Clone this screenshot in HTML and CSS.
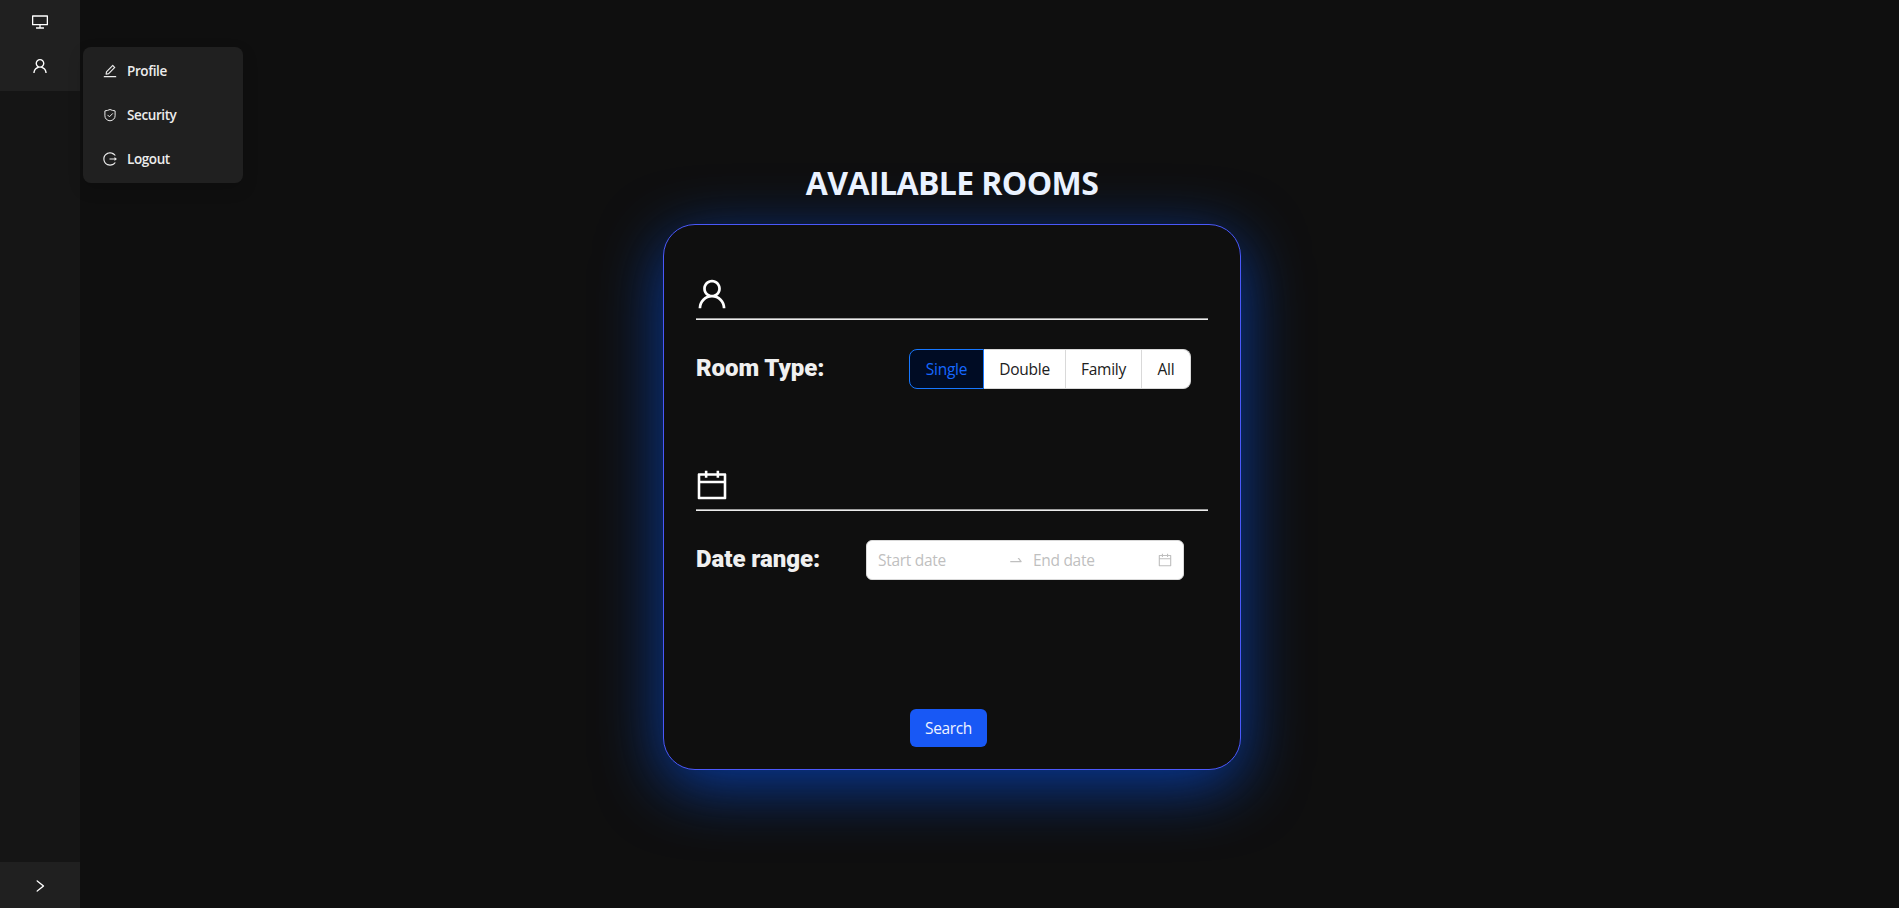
FILE: index.html
```
<!DOCTYPE html>
<html lang="en">
<head>
<meta charset="utf-8">
<title>Available Rooms</title>
<link rel="stylesheet" href="styles.css">
</head>
<body>
<svg class="defs" width="0" height="0">
  <symbol id="user" viewBox="64 64 896 896"><path d="M858.5 763.6a374 374 0 00-80.6-119.5 375.63 375.63 0 00-119.5-80.6c-.4-.2-.8-.3-1.2-.5C719.5 518 760 444.7 760 362c0-137-111-248-248-248S264 225 264 362c0 82.7 40.5 156 102.8 201.1-.4.2-.8.3-1.2.5-44.800 18.900-85 46-119.500 80.600a375.630 375.630 0 00-80.600 119.500A371.700 371.700 0 00136 901.800a8 8 0 008 8.200h60c4.400 0 7.900-3.500 8-7.800 2-77.200 33-149.500 87.800-204.300 56.700-56.700 132-87.900 212.200-87.900s155.500 31.200 212.200 87.900C779 752.700 810 825 812 902.200c.1 4.400 3.600 7.800 8 7.800h60a8 8 0 008-8.200c-1-47.800-10.900-94.300-29.500-138.200zM512 534c-45.900 0-89.100-17.900-121.600-50.400S340 407.900 340 362c0-45.900 17.900-89.100 50.400-121.600S466.100 190 512 190s89.100 17.900 121.600 50.400S684 316.100 684 362c0 45.900-17.900 89.100-50.400 121.600S557.900 534 512 534z"/></symbol>
  <symbol id="calendar" viewBox="64 64 896 896"><path d="M880 184H712v-64c0-4.400-3.600-8-8-8h-56c-4.400 0-8 3.600-8 8v64H384v-64c0-4.400-3.600-8-8-8h-56c-4.400 0-8 3.600-8 8v64H144c-17.700 0-32 14.300-32 32v664c0 17.700 14.300 32 32 32h736c17.700 0 32-14.300 32-32V216c0-17.700-14.300-32-32-32zm-40 656H184V460h656v380zM184 392V256h128v48c0 4.400 3.600 8 8 8h56c4.400 0 8-3.600 8-8v-48h256v48c0 4.400 3.600 8 8 8h56c4.400 0 8-3.600 8-8v-48h128v136H184z"/></symbol>
  <symbol id="desktop" viewBox="64 64 896 896"><path d="M928 140H96c-17.700 0-32 14.300-32 32v496c0 17.700 14.300 32 32 32h380v112H304c-8.800 0-16 7.200-16 16v48c0 4.400 3.600 8 8 8h432c4.400 0 8-3.600 8-8v-48c0-8.800-7.200-16-16-16H548V700h380c17.700 0 32-14.300 32-32V172c0-17.700-14.300-32-32-32zm-40 488H136V212h752v416z"/></symbol>
  <symbol id="edit" viewBox="64 64 896 896"><path d="M257.700 752c2 0 4-.2 6-.5L431.900 722c2-.4 3.900-1.300 5.300-2.800l423.900-423.900a9.960 9.960 0 000-14.100L694.900 114.900c-1.900-1.900-4.400-2.900-7.100-2.900s-5.200 1-7.100 2.900L256.800 538.800c-1.500 1.500-2.400 3.300-2.800 5.300l-29.500 168.200a33.500 33.500 0 009.400 29.800c6.600 6.400 14.900 9.900 23.800 9.900zm67.400-174.400L687.800 215l73.300 73.300-362.700 362.600-88.900 15.700 15.600-89zM880 836H144c-17.700 0-32 14.300-32 32v36c0 4.400 3.600 8 8 8h784c4.400 0 8-3.600 8-8v-36c0-17.700-14.300-32-32-32z"/></symbol>
  <symbol id="shield" viewBox="0 0 14 14" fill="none" stroke="currentColor"><path d="M1.900 2.900C3.700 2.700 5.500 2.200 7 1.500c1.500.7 3.300 1.200 5.100 1.400v4.900c0 2.700-2 4.700-5.100 5-3.100-.3-5.100-2.300-5.100-5z"/><path d="M4.500 6.900l1.900 1.900 3.400-3.400"/></symbol>
  <symbol id="logout" viewBox="64 64 896 896"><path d="M868 732h-70.300c-4.800 0-9.300 2.100-12.300 5.800-7 8.500-14.500 16.700-22.400 24.500a353.840 353.840 0 01-112.700 75.900A352.800 352.800 0 01512.400 866c-47.900 0-94.300-9.400-137.900-27.800a353.840 353.840 0 01-112.700-75.900 353.280 353.280 0 01-76-112.500C167.300 606.200 158 559.900 158 512s9.400-94.200 27.800-137.800c17.800-42.100 43.400-80 76-112.500s70.500-58.100 112.700-75.900c43.600-18.400 90-27.800 137.900-27.800 47.900 0 94.300 9.300 137.900 27.800 42.200 17.800 80.100 43.400 112.700 75.900 7.900 7.900 15.300 16.100 22.400 24.500 3 3.700 7.600 5.800 12.300 5.800H868c6.300 0 10.200-7 6.700-12.300C798 160.500 663.800 81.600 511.300 82 271.700 82.600 79.600 277.100 82 516.400 84.400 751.900 276.200 942 512.400 942c152.100 0 285.700-78.800 362.300-197.700 3.400-5.300-.4-12.300-6.700-12.300zm88.900-226.300L815 393.700c-5.300-4.200-13-.4-13 6.300v76H488c-4.400 0-8 3.600-8 8v56c0 4.400 3.600 8 8 8h314v76c0 6.700 7.800 10.500 13 6.300l141.900-112a8 8 0 000-12.600z"/></symbol>
  <symbol id="right" viewBox="64 64 896 896"><path d="M765.700 486.800L314.900 134.700A7.970 7.970 0 00302 141v77.300c0 4.900 2.300 9.600 6.100 12.600l360 281.100-360 281.100c-3.900 3-6.100 7.700-6.100 12.600V883c0 6.700 7.700 10.400 12.900 6.300l450.800-352.100a31.960 31.960 0 000-50.400z"/></symbol>
  <symbol id="swap-right" viewBox="0 0 1024 1024"><path d="M873.100 596.200l-164-208A32 32 0 00684 376h-64.800c-6.700 0-10.400 7.700-6.300 13l144.300 183H152c-4.400 0-8 3.600-8 8v60c0 4.400 3.600 8 8 8h695.900c26.800 0 41.700-30.800 25.200-51.800z"/></symbol>
</svg>

<div class="layout">
  <aside class="sider">
    <nav class="menu">
      <a class="menu-item"><svg class="icon-16"><use href="#desktop"/></svg></a>
      <a class="menu-item"><svg class="icon-16"><use href="#user"/></svg></a>
    </nav>
    <button class="trigger"><svg class="icon-14"><use href="#right"/></svg></button>
    <div class="submenu">
      <a class="submenu-item"><svg class="icon-14"><use href="#edit"/></svg><span>Profile</span></a>
      <a class="submenu-item"><svg class="icon-14"><use href="#shield"/></svg><span>Security</span></a>
      <a class="submenu-item"><svg class="icon-14"><use href="#logout"/></svg><span>Logout</span></a>
    </div>
  </aside>

  <main class="content">
    <h1 class="title">AVAILABLE ROOMS</h1>
    <section class="card">
      <div class="section-head"><svg class="icon-32"><use href="#user"/></svg></div>
      <div class="row">
        <h2 class="label label-room">Room Type:</h2>
        <div class="radio-group">
          <span class="radio radio-single">Single</span>
          <span class="radio radio-double">Double</span>
          <span class="radio radio-family">Family</span>
          <span class="radio radio-all">All</span>
        </div>
      </div>
      <div class="section-head section-date"><svg class="icon-32"><use href="#calendar"/></svg></div>
      <div class="row">
        <h2 class="label label-date">Date range:</h2>
        <div class="picker">
          <span class="start">Start date</span>
          <svg class="icon-16 arrow"><use href="#swap-right"/></svg>
          <span class="end">End date</span>
          <svg class="icon-14"><use href="#calendar"/></svg>
        </div>
      </div>
      <button class="search">Search</button>
    </section>
  </main>
</div>
</body>
</html>
```
FILE: styles.css
```
* { box-sizing: border-box; }
body {
  margin: 0;
  background: #0f0f0f;
  color: #fff;
  font-family: "Open Sans", "Noto Sans", sans-serif;
  overflow: hidden;
}
svg { fill: currentColor; flex: none; display: block; }
.defs { position: absolute; }
.icon-14 { width: 14px; height: 14px; }
.icon-16 { width: 16px; height: 16px; }
.icon-32 { width: 32px; height: 32px; }

.layout { display: flex; height: 908px; }
.sider {
  position: relative;
  width: 80px;
  flex: none;
  display: flex;
  flex-direction: column;
  justify-content: space-between;
  background: #151515;
}
.menu { height: 91px; background: #202020; }
.menu-item { display: flex; height: 44px; align-items: center; justify-content: center; }
.trigger {
  height: 46px;
  border: 0;
  padding: 2px 0 0;
  display: flex;
  align-items: center;
  justify-content: center;
  background: #202020;
  color: #fff;
}
.submenu {
  position: absolute;
  left: 83px;
  top: 47px;
  width: 160px;
  height: 136px;
  padding: 2px 0;
  border-radius: 8px;
  background: #202020;
  box-shadow: 0 6px 16px rgba(0, 0, 0, .15);
}
.submenu-item {
  display: flex;
  align-items: center;
  gap: 10px;
  height: 44px;
  padding-left: 20px;
  font-size: 13.5px;
  font-weight: 600;
  letter-spacing: -.4px;
  color: #ececec;
}
.submenu-item span { padding-bottom: 1px; }

.content { width: 578px; margin-left: 583px; padding-top: 161px; }
.title {
  margin: 0;
  height: 63px;
  text-align: center;
  font-size: 32px;
  line-height: 44px;
  font-weight: 700;
  letter-spacing: -.6px;
  color: #eaf2ff;
  position: relative;
  z-index: 1;
  white-space: nowrap;
}
.card {
  height: 546px;
  padding: 53px 32px 0;
  border: 1px solid #4a58fa;
  border-radius: 32px;
  background: #0f0f0f;
  box-shadow: 0 16px 64px rgba(6, 60, 165, .95);
}
.section-head { height: 42px; border-bottom: 1px solid #ececec; box-shadow: inset 0 -1px #9c9c9c; }
.section-date { margin-top: 80px; }
.row { display: flex; height: 69px; padding-top: 29px; }
.label {
  margin: 0;
  padding-top: 1px;
  font: 900 24px/36px Roboto, sans-serif;
  letter-spacing: -.05px;
  color: #f0f0f0;
  white-space: nowrap;
}
.label-room { width: 213px; }
.label-date { width: 170px; }
.radio-group { display: flex; height: 40px; font-size: 15.5px; letter-spacing: -.25px; }
.radio {
  display: flex;
  align-items: center;
  justify-content: center;
  background: #fff;
  color: #202020;
  border: 1px solid #d9d9d9;
  border-left: 0;
  white-space: nowrap;
}
.radio-single { width: 75px; background: #000c24; color: #1668ff; border: 1px solid #1677ff; border-radius: 8px 0 0 8px; }
.radio-double { width: 82px; }
.radio-family { width: 76px; }
.radio-all { width: 49px; border-radius: 0 8px 8px 0; }
.picker {
  display: flex;
  align-items: center;
  width: 318px;
  height: 40px;
  padding: 0 11px;
  border: 1px solid #d9d9d9;
  border-radius: 6px;
  background: #fff;
  color: #bfbfbf;
  font-size: 15.5px;
  letter-spacing: -.3px;
  white-space: nowrap;
}
.start { width: 130px; }
.arrow { margin-right: 9px; }
.end { width: 125px; }
.search {
  display: block;
  width: 77px;
  height: 38px;
  margin: 129px 0 0 214px;
  padding: 0;
  border: 0;
  border-radius: 6px;
  background: #1858f5;
  color: #eef3ff;
  font: 15.5px "Open Sans", sans-serif;
  letter-spacing: -.35px;
}
```
